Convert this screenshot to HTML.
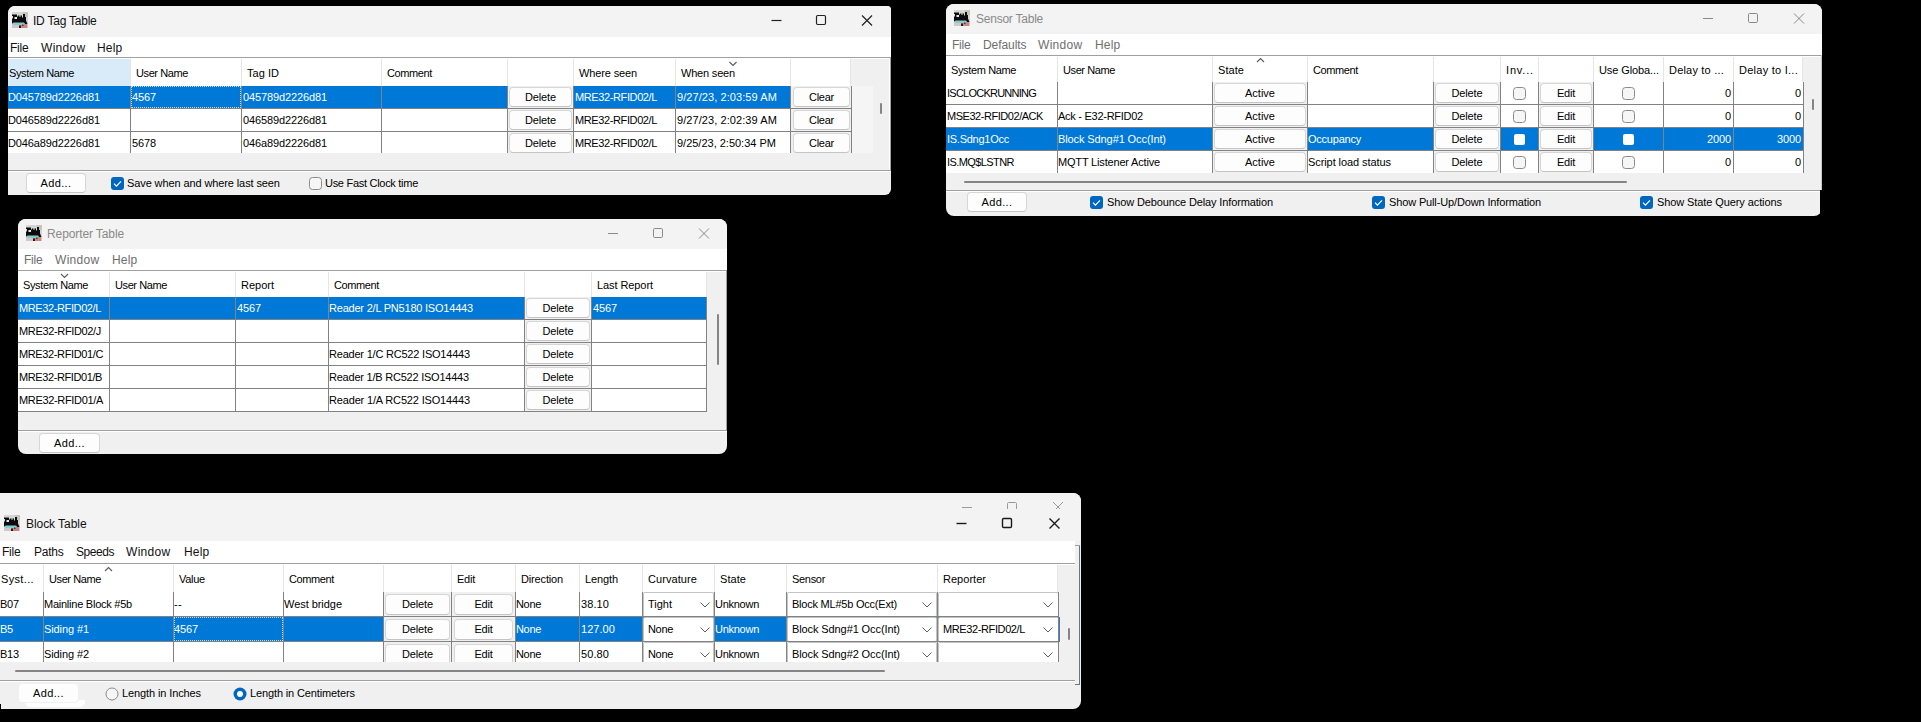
<!DOCTYPE html>
<html><head><meta charset="utf-8"><title>JMRI Tables</title>
<style>
html,body{margin:0;padding:0;background:#000;}
body{width:1921px;height:722px;position:relative;overflow:hidden;font-family:"Liberation Sans",sans-serif;font-size:11px;}
div,span,svg{position:absolute;}
.t{white-space:pre;line-height:13px;letter-spacing:-0.2px;color:#000;}
.btn{box-sizing:border-box;background:#fdfdfd;border:1px solid #d6d6d6;border-bottom-color:#c4c4c4;border-radius:4px;text-align:center;white-space:pre;letter-spacing:-0.2px;color:#000;}
</style></head>
<body>
<div class="win" style="left:8px;top:6px;width:883px;height:189px;background:#f0f0f0;border-radius:7px 4px 6px 0;overflow:hidden"><div style="left:0;top:0;width:883px;height:31px;background:#f3f3f3"></div><div style="left:0;top:31px;width:883px;height:21px;background:#fff"></div></div>
<svg class="ic" style="left:12px;top:12px" width="16" height="16" viewBox="0 0 16 16"><rect width="16" height="16" fill="#d6d4d4"/><rect x="11" y="0" width="5" height="5" fill="#c4c4be"/><rect x="0" y="12" width="16" height="4" fill="#d4c4cc"/><rect x="7" y="12" width="8" height="4" fill="#c88684"/><rect x="1" y="9" width="11" height="4" fill="#7fd2c6"/><rect x="5" y="10" width="6" height="2" fill="#8cc4e0"/><path d="M0 2.5h5v2h1v-1h1.5v1.5h1v-1.5h1.5v2h1v-3.5h2v3h1v3.5l1.5 3.5h-2.5l-1 -1.5h-10.5l-1 1h-0.5v-5h1v-2.5h-1z" fill="#0c0c0c"/><rect x="2.5" y="5" width="2.5" height="2" fill="#e8e8e8"/><rect x="7" y="13.5" width="2" height="2.5" fill="#2a1a14"/><rect x="10" y="12.5" width="1.5" height="1.5" fill="#5a3030"/></svg>
<span class="t" style="left:33px;top:13px;color:#111;font-size:12px;letter-spacing:-0.229px;line-height:16px">ID Tag Table</span>
<span class="t" style="left:10px;top:40px;color:#111;font-size:12px;letter-spacing:-0.211px;line-height:16px">File</span>
<span class="t" style="left:41px;top:40px;color:#111;font-size:12px;letter-spacing:0.302px;line-height:16px">Window</span>
<span class="t" style="left:97px;top:40px;color:#111;font-size:12px;letter-spacing:0.203px;line-height:16px">Help</span>
<svg class="ic" style="left:0;top:0" width="1921" height="722" viewBox="0 0 1921 722" fill="none" stroke="#222" stroke-width="1.2"><path d="M771.5 20.5h10"/><rect x="816.5" y="15.5" width="9" height="9" rx="1.2"/><path d="M862 15.5l10 10M872 15.5l-10 10"/></svg>
<div style="left:8px;top:57px;width:882px;height:1px;background:#a0a0a0"></div>
<div style="left:8px;top:58px;width:882px;height:1px;background:#fff"></div>
<div style="left:890px;top:57px;width:1px;height:114px;background:#a0a0a0"></div>
<div style="left:889px;top:58px;width:1px;height:112px;background:#fff"></div>
<div style="left:8px;top:59px;width:881px;height:94px;overflow:hidden"><div style="left:-8px;top:-59px;width:1921px;height:722px">
<div style="left:4px;top:59px;width:126px;height:27px;background:#d9ebf9"></div>
<div style="left:130px;top:59px;width:1px;height:27px;background:#e5e5e5"></div>
<span class="t" style="left:9px;top:67px;letter-spacing:-0.372px;">System Name</span>
<div style="left:131px;top:59px;width:110px;height:27px;background:#fff"></div>
<div style="left:241px;top:59px;width:1px;height:27px;background:#e5e5e5"></div>
<span class="t" style="left:136px;top:67px;letter-spacing:-0.403px;">User Name</span>
<div style="left:242px;top:59px;width:139px;height:27px;background:#fff"></div>
<div style="left:381px;top:59px;width:1px;height:27px;background:#e5e5e5"></div>
<span class="t" style="left:247px;top:67px;letter-spacing:0.031px;">Tag ID</span>
<div style="left:382px;top:59px;width:125px;height:27px;background:#fff"></div>
<div style="left:507px;top:59px;width:1px;height:27px;background:#e5e5e5"></div>
<span class="t" style="left:387px;top:67px;letter-spacing:-0.384px;">Comment</span>
<div style="left:508px;top:59px;width:65px;height:27px;background:#fff"></div>
<div style="left:573px;top:59px;width:1px;height:27px;background:#e5e5e5"></div>
<div style="left:574px;top:59px;width:101px;height:27px;background:#fff"></div>
<div style="left:675px;top:59px;width:1px;height:27px;background:#e5e5e5"></div>
<span class="t" style="left:579px;top:67px;letter-spacing:-0.134px;">Where seen</span>
<div style="left:676px;top:59px;width:114px;height:27px;background:#fff"></div>
<div style="left:790px;top:59px;width:1px;height:27px;background:#e5e5e5"></div>
<span class="t" style="left:681px;top:67px;letter-spacing:-0.188px;">When seen</span>
<div style="left:791px;top:59px;width:59px;height:27px;background:#fff"></div>
<div style="left:850px;top:59px;width:1px;height:27px;background:#e5e5e5"></div>
<svg class="ic" style="left:0;top:0" width="1921" height="722" viewBox="0 0 1921 722" fill="none" stroke="#5a5a5a" stroke-width="1.1"><path d="M729.5 62l3.5 3.5l3.5 -3.5"/></svg>
<div style="left:4px;top:86px;width:847px;height:67px;background:#fff"></div>
<div style="left:4px;top:86px;width:847px;height:22px;background:#0078d7"></div>
<span class="t" style="left:5px;top:91px;letter-spacing:-0.109px;color:#fff">ID045789d2226d81</span>
<span class="t" style="left:132px;top:91px;letter-spacing:-0.125px;color:#fff">4567</span>
<span class="t" style="left:243px;top:91px;letter-spacing:-0.125px;color:#fff">045789d2226d81</span>
<span class="t" style="left:575px;top:91px;letter-spacing:-0.388px;color:#fff">MRE32-RFID02/L</span>
<span class="t" style="left:677px;top:91px;letter-spacing:0.075px;color:#fff">9/27/23, 2:03:59 AM</span>
<div style="left:508px;top:86px;width:65px;height:22px;background:#f0f0f0"></div>
<div style="left:791px;top:86px;width:60px;height:22px;background:#f0f0f0"></div>
<div class="btn" style="left:509px;top:87px;width:63px;height:20px;line-height:18px;letter-spacing:-0.135px;">Delete</div>
<div class="btn" style="left:793px;top:87px;width:57px;height:20px;line-height:18px;letter-spacing:-0.256px;">Clear</div>
<div style="left:4px;top:108px;width:847px;height:1px;background:#828282"></div>
<span class="t" style="left:5px;top:114px;letter-spacing:-0.109px;color:#000">ID046589d2226d81</span>
<span class="t" style="left:132px;top:114px;letter-spacing:0.0px;color:#000"></span>
<span class="t" style="left:243px;top:114px;letter-spacing:-0.125px;color:#000">046589d2226d81</span>
<span class="t" style="left:575px;top:114px;letter-spacing:-0.388px;color:#000">MRE32-RFID02/L</span>
<span class="t" style="left:677px;top:114px;letter-spacing:0.075px;color:#000">9/27/23, 2:02:39 AM</span>
<div style="left:508px;top:109px;width:65px;height:22px;background:#f0f0f0"></div>
<div style="left:791px;top:109px;width:60px;height:22px;background:#f0f0f0"></div>
<div class="btn" style="left:509px;top:110px;width:63px;height:20px;line-height:18px;letter-spacing:-0.135px;">Delete</div>
<div class="btn" style="left:793px;top:110px;width:57px;height:20px;line-height:18px;letter-spacing:-0.256px;">Clear</div>
<div style="left:4px;top:131px;width:847px;height:1px;background:#828282"></div>
<span class="t" style="left:5px;top:137px;letter-spacing:-0.109px;color:#000">ID046a89d2226d81</span>
<span class="t" style="left:132px;top:137px;letter-spacing:-0.125px;color:#000">5678</span>
<span class="t" style="left:243px;top:137px;letter-spacing:-0.125px;color:#000">046a89d2226d81</span>
<span class="t" style="left:575px;top:137px;letter-spacing:-0.388px;color:#000">MRE32-RFID02/L</span>
<span class="t" style="left:677px;top:137px;letter-spacing:-0.01px;color:#000">9/25/23, 2:50:34 PM</span>
<div style="left:508px;top:132px;width:65px;height:22px;background:#f0f0f0"></div>
<div style="left:791px;top:132px;width:60px;height:22px;background:#f0f0f0"></div>
<div class="btn" style="left:509px;top:133px;width:63px;height:20px;line-height:18px;letter-spacing:-0.135px;">Delete</div>
<div class="btn" style="left:793px;top:133px;width:57px;height:20px;line-height:18px;letter-spacing:-0.256px;">Clear</div>
<div style="left:4px;top:154px;width:847px;height:1px;background:#828282"></div>
<div style="left:130px;top:86px;width:1px;height:67px;background:#828282"></div>
<div style="left:241px;top:86px;width:1px;height:67px;background:#828282"></div>
<div style="left:381px;top:86px;width:1px;height:67px;background:#828282"></div>
<div style="left:507px;top:86px;width:1px;height:67px;background:#828282"></div>
<div style="left:573px;top:86px;width:1px;height:67px;background:#828282"></div>
<div style="left:675px;top:86px;width:1px;height:67px;background:#828282"></div>
<div style="left:790px;top:86px;width:1px;height:67px;background:#828282"></div>
<div style="left:851px;top:86px;width:1px;height:67px;background:#828282"></div>
<div style="left:131px;top:86px;width:110px;height:22px;border:1px dotted #c0d8f0;box-sizing:border-box"></div>
</div></div>
<div style="left:852px;top:86px;width:21px;height:67px;background:#f5f5f5"></div>
<div style="left:880px;top:103px;width:2px;height:11px;background:#858585;border-radius:1px"></div>
<div style="left:8px;top:170px;width:883px;height:1px;background:#a0a0a0"></div>
<div style="left:8px;top:171px;width:883px;height:1px;background:#fff"></div>
<div class="btn" style="left:26px;top:173px;width:60px;height:20px;line-height:18px;letter-spacing:0.37px;">Add...</div>
<svg class="ic" style="left:111px;top:177px" width="13" height="13" viewBox="0 0 13 13"><rect x="0" y="0" width="13" height="13" rx="3" fill="#0067c0"/><path d="M3 6.7l2.4 2.4L10 4.3" fill="none" stroke="#fff" stroke-width="1.2"/></svg>
<span class="t" style="left:127px;top:177px;letter-spacing:-0.106px;">Save when and where last seen</span>
<svg class="ic" style="left:309px;top:177px" width="13" height="13" viewBox="0 0 13 13"><rect x="0.5" y="0.5" width="12" height="12" rx="3" fill="#f6f6f6" stroke="#8a8a8a"/></svg>
<span class="t" style="left:325px;top:177px;letter-spacing:-0.286px;">Use Fast Clock time</span>
<div class="win" style="left:946px;top:4px;width:876px;height:212px;background:#f0f0f0;border-radius:8px;overflow:hidden"><div style="left:0;top:0;width:876px;height:30px;background:#f3f3f3"></div><div style="left:0;top:30px;width:876px;height:21px;background:#fff"></div></div>
<svg class="ic" style="left:954px;top:10px" width="16" height="16" viewBox="0 0 16 16"><rect width="16" height="16" fill="#d6d4d4"/><rect x="11" y="0" width="5" height="5" fill="#c4c4be"/><rect x="0" y="12" width="16" height="4" fill="#d4c4cc"/><rect x="7" y="12" width="8" height="4" fill="#c88684"/><rect x="1" y="9" width="11" height="4" fill="#7fd2c6"/><rect x="5" y="10" width="6" height="2" fill="#8cc4e0"/><path d="M0 2.5h5v2h1v-1h1.5v1.5h1v-1.5h1.5v2h1v-3.5h2v3h1v3.5l1.5 3.5h-2.5l-1 -1.5h-10.5l-1 1h-0.5v-5h1v-2.5h-1z" fill="#0c0c0c"/><rect x="2.5" y="5" width="2.5" height="2" fill="#e8e8e8"/><rect x="7" y="13.5" width="2" height="2.5" fill="#2a1a14"/><rect x="10" y="12.5" width="1.5" height="1.5" fill="#5a3030"/></svg>
<span class="t" style="left:976px;top:11px;color:#8a8a8a;font-size:12px;letter-spacing:-0.234px;line-height:16px">Sensor Table</span>
<span class="t" style="left:952px;top:37px;color:#6e6e6e;font-size:12px;letter-spacing:-0.211px;line-height:16px">File</span>
<span class="t" style="left:983px;top:37px;color:#6e6e6e;font-size:12px;letter-spacing:-0.064px;line-height:16px">Defaults</span>
<span class="t" style="left:1038px;top:37px;color:#6e6e6e;font-size:12px;letter-spacing:0.302px;line-height:16px">Window</span>
<span class="t" style="left:1095px;top:37px;color:#6e6e6e;font-size:12px;letter-spacing:0.203px;line-height:16px">Help</span>
<svg class="ic" style="left:0;top:0" width="1921" height="722" viewBox="0 0 1921 722" fill="none" stroke="#8a8a8a" stroke-width="1.0"><path d="M1703 18.5h10"/><rect x="1748.5" y="13.5" width="9" height="9" rx="1.2"/><path d="M1794 13.5l10 10M1804 13.5l-10 10"/></svg>
<div style="left:946px;top:55px;width:876px;height:1px;background:#a0a0a0"></div>
<div style="left:946px;top:56px;width:876px;height:1px;background:#fff"></div>
<div style="left:1821px;top:55px;width:1px;height:135px;background:#c8c8c8"></div>
<div style="left:946px;top:57px;width:874px;height:116px;overflow:hidden"><div style="left:-946px;top:-57px;width:1921px;height:722px">
<div style="left:946px;top:57px;width:111px;height:25px;background:#fff"></div>
<div style="left:1057px;top:57px;width:1px;height:25px;background:#e5e5e5"></div>
<span class="t" style="left:951px;top:64px;letter-spacing:-0.372px;">System Name</span>
<div style="left:1058px;top:57px;width:154px;height:25px;background:#fff"></div>
<div style="left:1212px;top:57px;width:1px;height:25px;background:#e5e5e5"></div>
<span class="t" style="left:1063px;top:64px;letter-spacing:-0.403px;">User Name</span>
<div style="left:1213px;top:57px;width:94px;height:25px;background:#fff"></div>
<div style="left:1307px;top:57px;width:1px;height:25px;background:#e5e5e5"></div>
<span class="t" style="left:1218px;top:64px;letter-spacing:0.056px;">State</span>
<div style="left:1308px;top:57px;width:125px;height:25px;background:#fff"></div>
<div style="left:1433px;top:57px;width:1px;height:25px;background:#e5e5e5"></div>
<span class="t" style="left:1313px;top:64px;letter-spacing:-0.384px;">Comment</span>
<div style="left:1434px;top:57px;width:66px;height:25px;background:#fff"></div>
<div style="left:1500px;top:57px;width:1px;height:25px;background:#e5e5e5"></div>
<div style="left:1501px;top:57px;width:37px;height:25px;background:#fff"></div>
<div style="left:1538px;top:57px;width:1px;height:25px;background:#e5e5e5"></div>
<span class="t" style="left:1506px;top:64px;letter-spacing:0.823px;">Inv...</span>
<div style="left:1539px;top:57px;width:54px;height:25px;background:#fff"></div>
<div style="left:1593px;top:57px;width:1px;height:25px;background:#e5e5e5"></div>
<div style="left:1594px;top:57px;width:69px;height:25px;background:#fff"></div>
<div style="left:1663px;top:57px;width:1px;height:25px;background:#e5e5e5"></div>
<span class="t" style="left:1599px;top:64px;letter-spacing:-0.099px;">Use Globa...</span>
<div style="left:1664px;top:57px;width:69px;height:25px;background:#fff"></div>
<div style="left:1733px;top:57px;width:1px;height:25px;background:#e5e5e5"></div>
<span class="t" style="left:1669px;top:64px;letter-spacing:0.198px;">Delay to ...</span>
<div style="left:1734px;top:57px;width:68px;height:25px;background:#fff"></div>
<div style="left:1802px;top:57px;width:1px;height:25px;background:#e5e5e5"></div>
<span class="t" style="left:1739px;top:64px;letter-spacing:0.255px;">Delay to I...</span>
<svg class="ic" style="left:0;top:0" width="1921" height="722" viewBox="0 0 1921 722" fill="none" stroke="#5a5a5a" stroke-width="1.1"><path d="M1257.0 62.0l3.5 -3.5l3.5 3.5"/></svg>
<div style="left:946px;top:82px;width:858px;height:92px;background:#fff"></div>
<span class="t" style="left:947px;top:87px;letter-spacing:-0.759px;color:#000">ISCLOCKRUNNING</span>
<span class="t" style="left:1058px;top:87px;letter-spacing:0.0px;color:#000"></span>
<span class="t" style="left:1308px;top:87px;letter-spacing:0.0px;color:#000"></span>
<span class="t" style="right:190px;top:87px;letter-spacing:-0.125px;color:#000">0</span>
<span class="t" style="right:120px;top:87px;letter-spacing:-0.125px;color:#000">0</span>
<div style="left:1213px;top:82px;width:94px;height:22px;background:#f0f0f0"></div>
<div style="left:1434px;top:82px;width:66px;height:22px;background:#f0f0f0"></div>
<div style="left:1539px;top:82px;width:54px;height:22px;background:#f0f0f0"></div>
<div class="btn" style="left:1214px;top:83px;width:92px;height:20px;line-height:18px;letter-spacing:0.005px;">Active</div>
<div class="btn" style="left:1435px;top:83px;width:64px;height:20px;line-height:18px;letter-spacing:-0.135px;">Delete</div>
<div class="btn" style="left:1540px;top:83px;width:52px;height:20px;line-height:18px;letter-spacing:-0.242px;">Edit</div>
<svg class="ic" style="left:1513px;top:87px" width="13" height="13" viewBox="0 0 13 13"><rect x="0.5" y="0.5" width="12" height="12" rx="3" fill="#f6f6f6" stroke="#8a8a8a"/></svg>
<svg class="ic" style="left:1622px;top:87px" width="13" height="13" viewBox="0 0 13 13"><rect x="0.5" y="0.5" width="12" height="12" rx="3" fill="#f6f6f6" stroke="#8a8a8a"/></svg>
<div style="left:946px;top:104px;width:858px;height:1px;background:#828282"></div>
<span class="t" style="left:947px;top:110px;letter-spacing:-0.459px;color:#000">MSE32-RFID02/ACK</span>
<span class="t" style="left:1058px;top:110px;letter-spacing:-0.268px;color:#000">Ack - E32-RFID02</span>
<span class="t" style="left:1308px;top:110px;letter-spacing:0.0px;color:#000"></span>
<span class="t" style="right:190px;top:110px;letter-spacing:-0.125px;color:#000">0</span>
<span class="t" style="right:120px;top:110px;letter-spacing:-0.125px;color:#000">0</span>
<div style="left:1213px;top:105px;width:94px;height:22px;background:#f0f0f0"></div>
<div style="left:1434px;top:105px;width:66px;height:22px;background:#f0f0f0"></div>
<div style="left:1539px;top:105px;width:54px;height:22px;background:#f0f0f0"></div>
<div class="btn" style="left:1214px;top:106px;width:92px;height:20px;line-height:18px;letter-spacing:0.005px;">Active</div>
<div class="btn" style="left:1435px;top:106px;width:64px;height:20px;line-height:18px;letter-spacing:-0.135px;">Delete</div>
<div class="btn" style="left:1540px;top:106px;width:52px;height:20px;line-height:18px;letter-spacing:-0.242px;">Edit</div>
<svg class="ic" style="left:1513px;top:110px" width="13" height="13" viewBox="0 0 13 13"><rect x="0.5" y="0.5" width="12" height="12" rx="3" fill="#f6f6f6" stroke="#8a8a8a"/></svg>
<svg class="ic" style="left:1622px;top:110px" width="13" height="13" viewBox="0 0 13 13"><rect x="0.5" y="0.5" width="12" height="12" rx="3" fill="#f6f6f6" stroke="#8a8a8a"/></svg>
<div style="left:946px;top:127px;width:858px;height:1px;background:#828282"></div>
<div style="left:946px;top:128px;width:858px;height:22px;background:#0078d7"></div>
<span class="t" style="left:947px;top:133px;letter-spacing:-0.261px;color:#fff">IS.Sdng1Occ</span>
<span class="t" style="left:1058px;top:133px;letter-spacing:-0.101px;color:#fff">Block Sdng#1 Occ(Int)</span>
<span class="t" style="left:1308px;top:133px;letter-spacing:-0.229px;color:#fff">Occupancy</span>
<span class="t" style="right:190px;top:133px;letter-spacing:-0.125px;color:#fff">2000</span>
<span class="t" style="right:120px;top:133px;letter-spacing:-0.125px;color:#fff">3000</span>
<div style="left:1213px;top:128px;width:94px;height:22px;background:#f0f0f0"></div>
<div style="left:1434px;top:128px;width:66px;height:22px;background:#f0f0f0"></div>
<div style="left:1539px;top:128px;width:54px;height:22px;background:#f0f0f0"></div>
<div class="btn" style="left:1214px;top:129px;width:92px;height:20px;line-height:18px;letter-spacing:0.005px;">Active</div>
<div class="btn" style="left:1435px;top:129px;width:64px;height:20px;line-height:18px;letter-spacing:-0.135px;">Delete</div>
<div class="btn" style="left:1540px;top:129px;width:52px;height:20px;line-height:18px;letter-spacing:-0.242px;">Edit</div>
<svg class="ic" style="left:1513px;top:133px" width="13" height="13" viewBox="0 0 13 13"><rect x="1" y="1" width="11" height="11" rx="2" fill="#fdfdfd"/></svg>
<svg class="ic" style="left:1622px;top:133px" width="13" height="13" viewBox="0 0 13 13"><rect x="1" y="1" width="11" height="11" rx="2" fill="#fdfdfd"/></svg>
<div style="left:946px;top:150px;width:858px;height:1px;background:#828282"></div>
<span class="t" style="left:947px;top:156px;letter-spacing:-0.58px;color:#000">IS.MQ$LSTNR</span>
<span class="t" style="left:1058px;top:156px;letter-spacing:-0.18px;color:#000">MQTT Listener Active</span>
<span class="t" style="left:1308px;top:156px;letter-spacing:-0.08px;color:#000">Script load status</span>
<span class="t" style="right:190px;top:156px;letter-spacing:-0.125px;color:#000">0</span>
<span class="t" style="right:120px;top:156px;letter-spacing:-0.125px;color:#000">0</span>
<div style="left:1213px;top:151px;width:94px;height:22px;background:#f0f0f0"></div>
<div style="left:1434px;top:151px;width:66px;height:22px;background:#f0f0f0"></div>
<div style="left:1539px;top:151px;width:54px;height:22px;background:#f0f0f0"></div>
<div class="btn" style="left:1214px;top:152px;width:92px;height:20px;line-height:18px;letter-spacing:0.005px;">Active</div>
<div class="btn" style="left:1435px;top:152px;width:64px;height:20px;line-height:18px;letter-spacing:-0.135px;">Delete</div>
<div class="btn" style="left:1540px;top:152px;width:52px;height:20px;line-height:18px;letter-spacing:-0.242px;">Edit</div>
<svg class="ic" style="left:1513px;top:156px" width="13" height="13" viewBox="0 0 13 13"><rect x="0.5" y="0.5" width="12" height="12" rx="3" fill="#f6f6f6" stroke="#8a8a8a"/></svg>
<svg class="ic" style="left:1622px;top:156px" width="13" height="13" viewBox="0 0 13 13"><rect x="0.5" y="0.5" width="12" height="12" rx="3" fill="#f6f6f6" stroke="#8a8a8a"/></svg>
<div style="left:946px;top:173px;width:858px;height:1px;background:#828282"></div>
<div style="left:1057px;top:82px;width:1px;height:92px;background:#828282"></div>
<div style="left:1212px;top:82px;width:1px;height:92px;background:#828282"></div>
<div style="left:1307px;top:82px;width:1px;height:92px;background:#828282"></div>
<div style="left:1433px;top:82px;width:1px;height:92px;background:#828282"></div>
<div style="left:1500px;top:82px;width:1px;height:92px;background:#828282"></div>
<div style="left:1538px;top:82px;width:1px;height:92px;background:#828282"></div>
<div style="left:1593px;top:82px;width:1px;height:92px;background:#828282"></div>
<div style="left:1663px;top:82px;width:1px;height:92px;background:#828282"></div>
<div style="left:1733px;top:82px;width:1px;height:92px;background:#828282"></div>
<div style="left:1803px;top:82px;width:1px;height:92px;background:#828282"></div>
</div></div>
<div style="left:1812px;top:99px;width:2px;height:11px;background:#858585;border-radius:1px"></div>
<div style="left:964px;top:181px;width:663px;height:2px;background:#858585;border-radius:1px"></div>
<div style="left:946px;top:190px;width:876px;height:1px;background:#a0a0a0"></div>
<div style="left:946px;top:191px;width:876px;height:1px;background:#fff"></div>
<div class="btn" style="left:967px;top:192px;width:60px;height:20px;line-height:18px;letter-spacing:0.37px;">Add...</div>
<svg class="ic" style="left:1090px;top:196px" width="13" height="13" viewBox="0 0 13 13"><rect x="0" y="0" width="13" height="13" rx="3" fill="#0067c0"/><path d="M3 6.7l2.4 2.4L10 4.3" fill="none" stroke="#fff" stroke-width="1.2"/></svg>
<span class="t" style="left:1107px;top:196px;letter-spacing:-0.132px;">Show Debounce Delay Information</span>
<svg class="ic" style="left:1372px;top:196px" width="13" height="13" viewBox="0 0 13 13"><rect x="0" y="0" width="13" height="13" rx="3" fill="#0067c0"/><path d="M3 6.7l2.4 2.4L10 4.3" fill="none" stroke="#fff" stroke-width="1.2"/></svg>
<span class="t" style="left:1389px;top:196px;letter-spacing:-0.137px;">Show Pull-Up/Down Information</span>
<svg class="ic" style="left:1640px;top:196px" width="13" height="13" viewBox="0 0 13 13"><rect x="0" y="0" width="13" height="13" rx="3" fill="#0067c0"/><path d="M3 6.7l2.4 2.4L10 4.3" fill="none" stroke="#fff" stroke-width="1.2"/></svg>
<span class="t" style="left:1657px;top:196px;letter-spacing:-0.095px;">Show State Query actions</span>
<div style="left:1820px;top:190px;width:3px;height:28px;background:#000"></div>
<div class="win" style="left:18px;top:219px;width:709px;height:235px;background:#f0f0f0;border-radius:8px;overflow:hidden"><div style="left:0;top:0;width:709px;height:30px;background:#f3f3f3"></div><div style="left:0;top:30px;width:709px;height:21px;background:#fff"></div></div>
<svg class="ic" style="left:26px;top:225px" width="16" height="16" viewBox="0 0 16 16"><rect width="16" height="16" fill="#d6d4d4"/><rect x="11" y="0" width="5" height="5" fill="#c4c4be"/><rect x="0" y="12" width="16" height="4" fill="#d4c4cc"/><rect x="7" y="12" width="8" height="4" fill="#c88684"/><rect x="1" y="9" width="11" height="4" fill="#7fd2c6"/><rect x="5" y="10" width="6" height="2" fill="#8cc4e0"/><path d="M0 2.5h5v2h1v-1h1.5v1.5h1v-1.5h1.5v2h1v-3.5h2v3h1v3.5l1.5 3.5h-2.5l-1 -1.5h-10.5l-1 1h-0.5v-5h1v-2.5h-1z" fill="#0c0c0c"/><rect x="2.5" y="5" width="2.5" height="2" fill="#e8e8e8"/><rect x="7" y="13.5" width="2" height="2.5" fill="#2a1a14"/><rect x="10" y="12.5" width="1.5" height="1.5" fill="#5a3030"/></svg>
<span class="t" style="left:47px;top:226px;color:#8a8a8a;font-size:12px;letter-spacing:-0.106px;line-height:16px">Reporter Table</span>
<span class="t" style="left:24px;top:252px;color:#6e6e6e;font-size:12px;letter-spacing:-0.211px;line-height:16px">File</span>
<span class="t" style="left:55px;top:252px;color:#6e6e6e;font-size:12px;letter-spacing:0.302px;line-height:16px">Window</span>
<span class="t" style="left:112px;top:252px;color:#6e6e6e;font-size:12px;letter-spacing:0.203px;line-height:16px">Help</span>
<svg class="ic" style="left:0;top:0" width="1921" height="722" viewBox="0 0 1921 722" fill="none" stroke="#8a8a8a" stroke-width="1.0"><path d="M608 233.5h10"/><rect x="653.5" y="228.5" width="9" height="9" rx="1.2"/><path d="M699 228.5l10 10M709 228.5l-10 10"/></svg>
<div style="left:18px;top:270px;width:709px;height:1px;background:#a0a0a0"></div>
<div style="left:18px;top:271px;width:709px;height:1px;background:#fff"></div>
<div style="left:726px;top:270px;width:1px;height:160px;background:#a0a0a0"></div>
<div style="left:18px;top:272px;width:706px;height:140px;overflow:hidden"><div style="left:-18px;top:-272px;width:1921px;height:722px">
<div style="left:18px;top:272px;width:91px;height:25px;background:#fff"></div>
<div style="left:109px;top:272px;width:1px;height:25px;background:#e5e5e5"></div>
<span class="t" style="left:23px;top:279px;letter-spacing:-0.372px;">System Name</span>
<div style="left:110px;top:272px;width:125px;height:25px;background:#fff"></div>
<div style="left:235px;top:272px;width:1px;height:25px;background:#e5e5e5"></div>
<span class="t" style="left:115px;top:279px;letter-spacing:-0.403px;">User Name</span>
<div style="left:236px;top:272px;width:92px;height:25px;background:#fff"></div>
<div style="left:328px;top:272px;width:1px;height:25px;background:#e5e5e5"></div>
<span class="t" style="left:241px;top:279px;letter-spacing:-0.005px;">Report</span>
<div style="left:329px;top:272px;width:195px;height:25px;background:#fff"></div>
<div style="left:524px;top:272px;width:1px;height:25px;background:#e5e5e5"></div>
<span class="t" style="left:334px;top:279px;letter-spacing:-0.384px;">Comment</span>
<div style="left:525px;top:272px;width:66px;height:25px;background:#fff"></div>
<div style="left:591px;top:272px;width:1px;height:25px;background:#e5e5e5"></div>
<div style="left:592px;top:272px;width:114px;height:25px;background:#fff"></div>
<div style="left:706px;top:272px;width:1px;height:25px;background:#e5e5e5"></div>
<span class="t" style="left:597px;top:279px;letter-spacing:-0.082px;">Last Report</span>
<svg class="ic" style="left:0;top:0" width="1921" height="722" viewBox="0 0 1921 722" fill="none" stroke="#5a5a5a" stroke-width="1.1"><path d="M61.0 274l3.5 3.5l3.5 -3.5"/></svg>
<div style="left:18px;top:297px;width:689px;height:116px;background:#fff"></div>
<div style="left:18px;top:297px;width:689px;height:22px;background:#0078d7"></div>
<span class="t" style="left:19px;top:302px;letter-spacing:-0.388px;color:#fff">MRE32-RFID02/L</span>
<span class="t" style="left:237px;top:302px;letter-spacing:-0.125px;color:#fff">4567</span>
<span class="t" style="left:329px;top:302px;letter-spacing:-0.214px;color:#fff">Reader 2/L PN5180 ISO14443</span>
<span class="t" style="left:593px;top:302px;letter-spacing:-0.125px;color:#fff">4567</span>
<div style="left:525px;top:297px;width:66px;height:22px;background:#f0f0f0"></div>
<div class="btn" style="left:526px;top:298px;width:64px;height:20px;line-height:18px;letter-spacing:-0.135px;">Delete</div>
<div style="left:18px;top:319px;width:689px;height:1px;background:#828282"></div>
<span class="t" style="left:19px;top:325px;letter-spacing:-0.344px;color:#000">MRE32-RFID02/J</span>
<span class="t" style="left:237px;top:325px;letter-spacing:0.0px;color:#000"></span>
<span class="t" style="left:329px;top:325px;letter-spacing:0.0px;color:#000"></span>
<span class="t" style="left:593px;top:325px;letter-spacing:0.0px;color:#000"></span>
<div style="left:525px;top:320px;width:66px;height:22px;background:#f0f0f0"></div>
<div class="btn" style="left:526px;top:321px;width:64px;height:20px;line-height:18px;letter-spacing:-0.135px;">Delete</div>
<div style="left:18px;top:342px;width:689px;height:1px;background:#828282"></div>
<span class="t" style="left:19px;top:348px;letter-spacing:-0.375px;color:#000">MRE32-RFID01/C</span>
<span class="t" style="left:237px;top:348px;letter-spacing:0.0px;color:#000"></span>
<span class="t" style="left:329px;top:348px;letter-spacing:-0.21px;color:#000">Reader 1/C RC522 ISO14443</span>
<span class="t" style="left:593px;top:348px;letter-spacing:0.0px;color:#000"></span>
<div style="left:525px;top:343px;width:66px;height:22px;background:#f0f0f0"></div>
<div class="btn" style="left:526px;top:344px;width:64px;height:20px;line-height:18px;letter-spacing:-0.135px;">Delete</div>
<div style="left:18px;top:365px;width:689px;height:1px;background:#828282"></div>
<span class="t" style="left:19px;top:371px;letter-spacing:-0.404px;color:#000">MRE32-RFID01/B</span>
<span class="t" style="left:237px;top:371px;letter-spacing:0.0px;color:#000"></span>
<span class="t" style="left:329px;top:371px;letter-spacing:-0.226px;color:#000">Reader 1/B RC522 ISO14443</span>
<span class="t" style="left:593px;top:371px;letter-spacing:0.0px;color:#000"></span>
<div style="left:525px;top:366px;width:66px;height:22px;background:#f0f0f0"></div>
<div class="btn" style="left:526px;top:367px;width:64px;height:20px;line-height:18px;letter-spacing:-0.135px;">Delete</div>
<div style="left:18px;top:388px;width:689px;height:1px;background:#828282"></div>
<span class="t" style="left:19px;top:394px;letter-spacing:-0.333px;color:#000">MRE32-RFID01/A</span>
<span class="t" style="left:237px;top:394px;letter-spacing:0.0px;color:#000"></span>
<span class="t" style="left:329px;top:394px;letter-spacing:-0.162px;color:#000">Reader 1/A RC522 ISO14443</span>
<span class="t" style="left:593px;top:394px;letter-spacing:0.0px;color:#000"></span>
<div style="left:525px;top:389px;width:66px;height:22px;background:#f0f0f0"></div>
<div class="btn" style="left:526px;top:390px;width:64px;height:20px;line-height:18px;letter-spacing:-0.135px;">Delete</div>
<div style="left:18px;top:411px;width:689px;height:1px;background:#828282"></div>
<div style="left:109px;top:297px;width:1px;height:116px;background:#828282"></div>
<div style="left:235px;top:297px;width:1px;height:116px;background:#828282"></div>
<div style="left:328px;top:297px;width:1px;height:116px;background:#828282"></div>
<div style="left:524px;top:297px;width:1px;height:116px;background:#828282"></div>
<div style="left:591px;top:297px;width:1px;height:116px;background:#828282"></div>
<div style="left:706px;top:297px;width:1px;height:116px;background:#828282"></div>
</div></div>
<div style="left:717px;top:314px;width:2px;height:51px;background:#858585;border-radius:1px"></div>
<div style="left:18px;top:430px;width:709px;height:1px;background:#a0a0a0"></div>
<div style="left:18px;top:431px;width:709px;height:1px;background:#fff"></div>
<div class="btn" style="left:39px;top:433px;width:61px;height:20px;line-height:18px;letter-spacing:0.37px;">Add...</div>
<div class="win" style="left:-8px;top:493px;width:1089px;height:216px;background:#f0f0f0;border-radius:8px;overflow:hidden"><div style="left:0;top:0;width:1089px;height:48px;background:#f3f3f3"></div><div style="left:0;top:48px;width:1089px;height:22px;background:#fff"></div></div>
<svg class="ic" style="left:4px;top:515px" width="16" height="16" viewBox="0 0 16 16"><rect width="16" height="16" fill="#d6d4d4"/><rect x="11" y="0" width="5" height="5" fill="#c4c4be"/><rect x="0" y="12" width="16" height="4" fill="#d4c4cc"/><rect x="7" y="12" width="8" height="4" fill="#c88684"/><rect x="1" y="9" width="11" height="4" fill="#7fd2c6"/><rect x="5" y="10" width="6" height="2" fill="#8cc4e0"/><path d="M0 2.5h5v2h1v-1h1.5v1.5h1v-1.5h1.5v2h1v-3.5h2v3h1v3.5l1.5 3.5h-2.5l-1 -1.5h-10.5l-1 1h-0.5v-5h1v-2.5h-1z" fill="#0c0c0c"/><rect x="2.5" y="5" width="2.5" height="2" fill="#e8e8e8"/><rect x="7" y="13.5" width="2" height="2.5" fill="#2a1a14"/><rect x="10" y="12.5" width="1.5" height="1.5" fill="#5a3030"/></svg>
<span class="t" style="left:26px;top:516px;color:#111;font-size:12px;letter-spacing:-0.058px;line-height:16px">Block Table</span>
<span class="t" style="left:2px;top:544px;color:#111;font-size:12px;letter-spacing:-0.211px;line-height:16px">File</span>
<span class="t" style="left:34px;top:544px;color:#111;font-size:12px;letter-spacing:-0.234px;line-height:16px">Paths</span>
<span class="t" style="left:76px;top:544px;color:#111;font-size:12px;letter-spacing:-0.448px;line-height:16px">Speeds</span>
<span class="t" style="left:126px;top:544px;color:#111;font-size:12px;letter-spacing:0.302px;line-height:16px">Window</span>
<span class="t" style="left:184px;top:544px;color:#111;font-size:12px;letter-spacing:0.203px;line-height:16px">Help</span>
<svg class="ic" style="left:0;top:0" width="1921" height="722" viewBox="0 0 1921 722" fill="none" stroke="#9a9a9a" stroke-width="1"><path d="M962 507.5h10M1007.5 509v-5.5a1 1 0 0 1 1 -1h7a1 1 0 0 1 1 1v5.5M1053 502l7 7M1063 502l-7 7"/></svg>
<svg class="ic" style="left:0;top:0" width="1921" height="722" viewBox="0 0 1921 722" fill="none" stroke="#1a1a1a" stroke-width="1.4"><path d="M956.5 523.5h10"/><rect x="1002.5" y="518.5" width="9" height="9" rx="1.2"/><path d="M1049.5 518.5l10 10M1059.5 518.5l-10 10"/></svg>
<div style="left:1075px;top:541px;width:6px;height:24px;background:#f0f0f0"></div>
<div style="left:1079px;top:545px;width:1px;height:140px;background:#6a7684"></div>
<div style="left:1075px;top:684px;width:5px;height:1px;background:#6a7684"></div>
<div style="left:1075px;top:545px;width:5px;height:1px;background:#a0a0a0"></div>
<div style="left:0px;top:563px;width:1075px;height:1px;background:#a0a0a0"></div>
<div style="left:0px;top:564px;width:1075px;height:1px;background:#fff"></div>
<div style="left:0px;top:565px;width:1075px;height:97px;overflow:hidden"><div style="left:0px;top:-565px;width:1921px;height:722px">
<div style="left:-10px;top:565px;width:53px;height:28px;background:#fff"></div>
<div style="left:43px;top:565px;width:1px;height:28px;background:#e5e5e5"></div>
<div style="left:44px;top:565px;width:129px;height:28px;background:#fff"></div>
<div style="left:173px;top:565px;width:1px;height:28px;background:#e5e5e5"></div>
<span class="t" style="left:49px;top:573px;letter-spacing:-0.403px;">User Name</span>
<div style="left:174px;top:565px;width:109px;height:28px;background:#fff"></div>
<div style="left:283px;top:565px;width:1px;height:28px;background:#e5e5e5"></div>
<span class="t" style="left:179px;top:573px;letter-spacing:-0.269px;">Value</span>
<div style="left:284px;top:565px;width:99px;height:28px;background:#fff"></div>
<div style="left:383px;top:565px;width:1px;height:28px;background:#e5e5e5"></div>
<span class="t" style="left:289px;top:573px;letter-spacing:-0.384px;">Comment</span>
<div style="left:384px;top:565px;width:67px;height:28px;background:#fff"></div>
<div style="left:451px;top:565px;width:1px;height:28px;background:#e5e5e5"></div>
<div style="left:452px;top:565px;width:63px;height:28px;background:#fff"></div>
<div style="left:515px;top:565px;width:1px;height:28px;background:#e5e5e5"></div>
<span class="t" style="left:457px;top:573px;letter-spacing:-0.242px;">Edit</span>
<div style="left:516px;top:565px;width:63px;height:28px;background:#fff"></div>
<div style="left:579px;top:565px;width:1px;height:28px;background:#e5e5e5"></div>
<span class="t" style="left:521px;top:573px;letter-spacing:-0.156px;">Direction</span>
<div style="left:580px;top:565px;width:62px;height:28px;background:#fff"></div>
<div style="left:642px;top:565px;width:1px;height:28px;background:#e5e5e5"></div>
<span class="t" style="left:585px;top:573px;letter-spacing:-0.115px;">Length</span>
<div style="left:643px;top:565px;width:71px;height:28px;background:#fff"></div>
<div style="left:714px;top:565px;width:1px;height:28px;background:#e5e5e5"></div>
<span class="t" style="left:648px;top:573px;letter-spacing:0.076px;">Curvature</span>
<div style="left:715px;top:565px;width:71px;height:28px;background:#fff"></div>
<div style="left:786px;top:565px;width:1px;height:28px;background:#e5e5e5"></div>
<span class="t" style="left:720px;top:573px;letter-spacing:0.056px;">State</span>
<div style="left:787px;top:565px;width:150px;height:28px;background:#fff"></div>
<div style="left:937px;top:565px;width:1px;height:28px;background:#e5e5e5"></div>
<span class="t" style="left:792px;top:573px;letter-spacing:-0.312px;">Sensor</span>
<div style="left:938px;top:565px;width:119px;height:28px;background:#fff"></div>
<div style="left:1057px;top:565px;width:1px;height:28px;background:#e5e5e5"></div>
<span class="t" style="left:943px;top:573px;letter-spacing:0.023px;">Reporter</span>
<div style="left:0px;top:592px;width:1060px;height:1px;background:#fff"></div>
<span class="t" style="left:1px;top:573px;letter-spacing:0.344px;">Syst...</span>
<svg class="ic" style="left:0;top:0" width="1921" height="722" viewBox="0 0 1921 722" fill="none" stroke="#5a5a5a" stroke-width="1.1"><path d="M105.0 571.0l3.5 -3.5l3.5 3.5"/></svg>
<div style="left:0px;top:592px;width:1059px;height:70px;background:#fff"></div>
<span class="t" style="left:-3px;top:598px;letter-spacing:-0.164px;color:#000">IB07</span>
<span class="t" style="left:44px;top:598px;letter-spacing:-0.243px;color:#000">Mainline Block #5b</span>
<span class="t" style="left:174px;top:598px;letter-spacing:0.344px;color:#000">--</span>
<span class="t" style="left:284px;top:598px;letter-spacing:-0.047px;color:#000">West bridge</span>
<span class="t" style="left:516px;top:598px;letter-spacing:-0.328px;color:#000">None</span>
<span class="t" style="left:581px;top:598px;letter-spacing:0.087px;color:#000">38.10</span>
<span class="t" style="left:715px;top:598px;letter-spacing:-0.268px;color:#000">Unknown</span>
<div style="left:384px;top:592px;width:67px;height:24px;background:#f0f0f0"></div>
<div style="left:452px;top:592px;width:63px;height:24px;background:#f0f0f0"></div>
<div class="btn" style="left:385px;top:594px;width:65px;height:21px;line-height:19px;letter-spacing:-0.135px;">Delete</div>
<div class="btn" style="left:454px;top:594px;width:59px;height:21px;line-height:19px;letter-spacing:-0.242px;">Edit</div>
<div style="left:643px;top:592px;width:71px;height:25px;background:#fff;border:1px solid #c4c4c4;border-bottom-color:#9c9c9c;box-sizing:border-box;border-radius:2px"></div>
<span class="t" style="left:648px;top:598px;letter-spacing:-0.013px;">Tight</span>
<svg class="ic" style="left:700px;top:602px" width="10" height="6" viewBox="0 0 10 6" fill="none" stroke="#606060" stroke-width="1"><path d="M0.5 0.5l4.5 4.5l4.5 -4.5"/></svg>
<div style="left:787px;top:592px;width:150px;height:25px;background:#fff;border:1px solid #c4c4c4;border-bottom-color:#9c9c9c;box-sizing:border-box;border-radius:2px"></div>
<span class="t" style="left:792px;top:598px;letter-spacing:-0.223px;">Block ML#5b Occ(Ext)</span>
<svg class="ic" style="left:922px;top:602px" width="10" height="6" viewBox="0 0 10 6" fill="none" stroke="#606060" stroke-width="1"><path d="M0.5 0.5l4.5 4.5l4.5 -4.5"/></svg>
<div style="left:938px;top:592px;width:121px;height:25px;background:#fff;border:1px solid #c4c4c4;border-bottom-color:#9c9c9c;box-sizing:border-box;border-radius:2px"></div>
<svg class="ic" style="left:1043px;top:602px" width="10" height="6" viewBox="0 0 10 6" fill="none" stroke="#606060" stroke-width="1"><path d="M0.5 0.5l4.5 4.5l4.5 -4.5"/></svg>
<div style="left:0px;top:616px;width:1059px;height:1px;background:#828282"></div>
<div style="left:0px;top:617px;width:1060px;height:24px;background:#0078d7"></div>
<span class="t" style="left:-3px;top:623px;letter-spacing:-0.177px;color:#fff">IB5</span>
<span class="t" style="left:44px;top:623px;letter-spacing:-0.101px;color:#fff">Siding #1</span>
<span class="t" style="left:174px;top:623px;letter-spacing:-0.125px;color:#fff">4567</span>
<span class="t" style="left:284px;top:623px;letter-spacing:0.0px;color:#fff"></span>
<span class="t" style="left:516px;top:623px;letter-spacing:-0.328px;color:#fff">None</span>
<span class="t" style="left:581px;top:623px;letter-spacing:0.052px;color:#fff">127.00</span>
<span class="t" style="left:715px;top:623px;letter-spacing:-0.268px;color:#fff">Unknown</span>
<div style="left:384px;top:617px;width:67px;height:24px;background:#f0f0f0"></div>
<div style="left:452px;top:617px;width:63px;height:24px;background:#f0f0f0"></div>
<div class="btn" style="left:385px;top:619px;width:65px;height:21px;line-height:19px;letter-spacing:-0.135px;">Delete</div>
<div class="btn" style="left:454px;top:619px;width:59px;height:21px;line-height:19px;letter-spacing:-0.242px;">Edit</div>
<div style="left:643px;top:617px;width:71px;height:25px;background:#fff;border:1px solid #c4c4c4;border-bottom-color:#9c9c9c;box-sizing:border-box;border-radius:2px"></div>
<span class="t" style="left:648px;top:623px;letter-spacing:-0.328px;">None</span>
<svg class="ic" style="left:700px;top:627px" width="10" height="6" viewBox="0 0 10 6" fill="none" stroke="#606060" stroke-width="1"><path d="M0.5 0.5l4.5 4.5l4.5 -4.5"/></svg>
<div style="left:787px;top:617px;width:150px;height:25px;background:#fff;border:1px solid #c4c4c4;border-bottom-color:#9c9c9c;box-sizing:border-box;border-radius:2px"></div>
<span class="t" style="left:792px;top:623px;letter-spacing:-0.101px;">Block Sdng#1 Occ(Int)</span>
<svg class="ic" style="left:922px;top:627px" width="10" height="6" viewBox="0 0 10 6" fill="none" stroke="#606060" stroke-width="1"><path d="M0.5 0.5l4.5 4.5l4.5 -4.5"/></svg>
<div style="left:938px;top:617px;width:121px;height:25px;background:#fff;border:1px solid #c4c4c4;border-bottom-color:#9c9c9c;box-sizing:border-box;border-radius:2px"></div>
<span class="t" style="left:943px;top:623px;letter-spacing:-0.388px;">MRE32-RFID02/L</span>
<svg class="ic" style="left:1043px;top:627px" width="10" height="6" viewBox="0 0 10 6" fill="none" stroke="#606060" stroke-width="1"><path d="M0.5 0.5l4.5 4.5l4.5 -4.5"/></svg>
<div style="left:0px;top:641px;width:1059px;height:1px;background:#828282"></div>
<span class="t" style="left:-3px;top:648px;letter-spacing:-0.164px;color:#000">IB13</span>
<span class="t" style="left:44px;top:648px;letter-spacing:-0.101px;color:#000">Siding #2</span>
<span class="t" style="left:174px;top:648px;letter-spacing:0.0px;color:#000"></span>
<span class="t" style="left:284px;top:648px;letter-spacing:0.0px;color:#000"></span>
<span class="t" style="left:516px;top:648px;letter-spacing:-0.328px;color:#000">None</span>
<span class="t" style="left:581px;top:648px;letter-spacing:0.087px;color:#000">50.80</span>
<span class="t" style="left:715px;top:648px;letter-spacing:-0.268px;color:#000">Unknown</span>
<div style="left:384px;top:642px;width:67px;height:24px;background:#f0f0f0"></div>
<div style="left:452px;top:642px;width:63px;height:24px;background:#f0f0f0"></div>
<div class="btn" style="left:385px;top:644px;width:65px;height:21px;line-height:19px;letter-spacing:-0.135px;">Delete</div>
<div class="btn" style="left:454px;top:644px;width:59px;height:21px;line-height:19px;letter-spacing:-0.242px;">Edit</div>
<div style="left:643px;top:642px;width:71px;height:25px;background:#fff;border:1px solid #c4c4c4;border-bottom-color:#9c9c9c;box-sizing:border-box;border-radius:2px"></div>
<span class="t" style="left:648px;top:648px;letter-spacing:-0.328px;">None</span>
<svg class="ic" style="left:700px;top:652px" width="10" height="6" viewBox="0 0 10 6" fill="none" stroke="#606060" stroke-width="1"><path d="M0.5 0.5l4.5 4.5l4.5 -4.5"/></svg>
<div style="left:787px;top:642px;width:150px;height:25px;background:#fff;border:1px solid #c4c4c4;border-bottom-color:#9c9c9c;box-sizing:border-box;border-radius:2px"></div>
<span class="t" style="left:792px;top:648px;letter-spacing:-0.101px;">Block Sdng#2 Occ(Int)</span>
<svg class="ic" style="left:922px;top:652px" width="10" height="6" viewBox="0 0 10 6" fill="none" stroke="#606060" stroke-width="1"><path d="M0.5 0.5l4.5 4.5l4.5 -4.5"/></svg>
<div style="left:938px;top:642px;width:121px;height:25px;background:#fff;border:1px solid #c4c4c4;border-bottom-color:#9c9c9c;box-sizing:border-box;border-radius:2px"></div>
<svg class="ic" style="left:1043px;top:652px" width="10" height="6" viewBox="0 0 10 6" fill="none" stroke="#606060" stroke-width="1"><path d="M0.5 0.5l4.5 4.5l4.5 -4.5"/></svg>
<div style="left:0px;top:666px;width:1059px;height:1px;background:#828282"></div>
<div style="left:43px;top:592px;width:1px;height:70px;background:#828282"></div>
<div style="left:173px;top:592px;width:1px;height:70px;background:#828282"></div>
<div style="left:283px;top:592px;width:1px;height:70px;background:#828282"></div>
<div style="left:383px;top:592px;width:1px;height:70px;background:#828282"></div>
<div style="left:451px;top:592px;width:1px;height:70px;background:#828282"></div>
<div style="left:515px;top:592px;width:1px;height:70px;background:#828282"></div>
<div style="left:579px;top:592px;width:1px;height:70px;background:#828282"></div>
<div style="left:642px;top:592px;width:1px;height:70px;background:#828282"></div>
<div style="left:714px;top:592px;width:1px;height:70px;background:#828282"></div>
<div style="left:786px;top:592px;width:1px;height:70px;background:#828282"></div>
<div style="left:937px;top:592px;width:1px;height:70px;background:#828282"></div>
<div style="left:1058px;top:592px;width:1px;height:70px;background:#828282"></div>
<div style="left:174px;top:617px;width:109px;height:24px;border:1px dotted #c0d8f0;box-sizing:border-box"></div>
<div style="left:1059px;top:617px;width:1px;height:25px;background:#3a78c0"></div>
</div></div>
<div style="left:1068px;top:628px;width:2px;height:12px;background:#858585;border-radius:1px"></div>
<div style="left:15px;top:670px;width:870px;height:2px;background:#858585;border-radius:1px"></div>
<div style="left:0px;top:680px;width:1075px;height:1px;background:#a0a0a0"></div>
<div style="left:0px;top:681px;width:1075px;height:1px;background:#fff"></div>
<div style="left:25px;top:700px;width:60px;height:7px;background:#fdfdfd;border-radius:0 0 5px 5px"></div>
<div style="left:0px;top:704px;width:1px;height:5px;background:#000"></div>
<div class="btn" style="left:18px;top:683px;width:61px;height:20px;line-height:18px;letter-spacing:0.37px;border-color:#f0f0f0">Add...</div>
<svg class="ic" style="left:105px;top:686.5px" width="14" height="14" viewBox="0 0 14 14"><circle cx="7" cy="7" r="6" fill="#f6f6f6" stroke="#8a8a8a"/></svg>
<span class="t" style="left:122px;top:687px;letter-spacing:-0.113px;">Length in Inches</span>
<svg class="ic" style="left:233px;top:686.5px" width="14" height="14" viewBox="0 0 14 14"><circle cx="7" cy="7" r="6.5" fill="#0067c0"/><circle cx="7" cy="7" r="3" fill="#fff"/></svg>
<span class="t" style="left:250px;top:687px;letter-spacing:-0.128px;">Length in Centimeters</span>
</body></html>
